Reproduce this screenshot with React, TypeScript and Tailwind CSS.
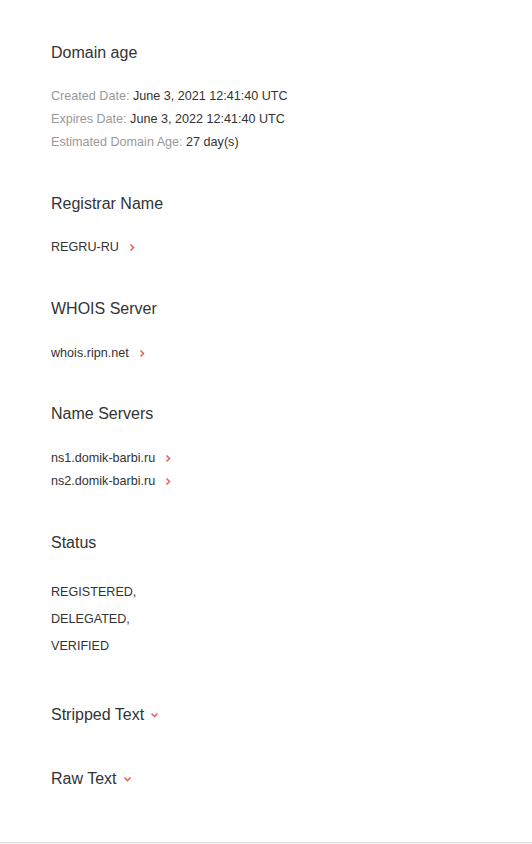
import React from "react";

function ChevronRight() {
  return (
    <svg width="8" height="9" viewBox="0 0 8 9" className="ml-[9px] inline-block" aria-hidden>
      <path d="M2.5 1.5 L5.5 4.5 L2.5 7.5" fill="none" stroke="#e8625a" strokeWidth="1.6" />
    </svg>
  );
}

function ChevronDown() {
  return (
    <svg width="9" height="8" viewBox="0 0 9 8" className="ml-[6px] inline-block" aria-hidden>
      <path d="M1.5 2.5 L4.5 5.5 L7.5 2.5" fill="none" stroke="#e8625a" strokeWidth="1.6" />
    </svg>
  );
}

function Heading({ children }: { children: React.ReactNode }) {
  return <h2 className="text-[16px] leading-[24px] text-[#333]">{children}</h2>;
}

function LinkRow({ text }: { text: string }) {
  return (
    <div className="flex items-center leading-[23px]">
      <span>{text}</span>
      <ChevronRight />
    </div>
  );
}

export default function App() {
  return (
    <div className="min-h-[844px] bg-white flex flex-col" style={{ fontFamily: '"Liberation Sans", Arial, sans-serif' }}>
      <div className="flex-1 px-[51px] pt-[41px] pb-[51px] text-[12.6px] text-[#333]">
        <section>
          <Heading>Domain age</Heading>
          <div className="mt-[19.5px] leading-[23px]">
            <div><span className="text-[#999]">Created Date:</span> June 3, 2021 12:41:40 UTC</div>
            <div><span className="text-[#999]">Expires Date:</span> June 3, 2022 12:41:40 UTC</div>
            <div><span className="text-[#999]">Estimated Domain Age:</span> 27 day(s)</div>
          </div>
        </section>

        <section className="mt-[38.5px]">
          <Heading>Registrar Name</Heading>
          <div className="mt-[19.5px]">
            <LinkRow text="REGRU-RU" />
          </div>
        </section>

        <section className="mt-[38.5px]">
          <Heading>WHOIS Server</Heading>
          <div className="mt-[20.5px]">
            <LinkRow text="whois.ripn.net" />
          </div>
        </section>

        <section className="mt-[37.5px]">
          <Heading>Name Servers</Heading>
          <div className="mt-[20.5px]">
            <LinkRow text="ns1.domik-barbi.ru" />
            <LinkRow text="ns2.domik-barbi.ru" />
          </div>
        </section>

        <section className="mt-[38.5px]">
          <Heading>Status</Heading>
          <div className="mt-[23.5px] leading-[27px]">
            <div>REGISTERED,</div>
            <div>DELEGATED,</div>
            <div>VERIFIED</div>
          </div>
        </section>

        <section className="mt-[43.5px]">
          <h2 className="flex items-center text-[16px] leading-[24px] text-[#333]">
            Stripped Text
            <ChevronDown />
          </h2>
        </section>

        <section className="mt-[40px]">
          <h2 className="flex items-center text-[16px] leading-[24px] text-[#333]">
            Raw Text
            <ChevronDown />
          </h2>
        </section>
      </div>
      <div className="h-[3px] border-t border-[#dcdcdc] bg-[#f2f2f2]" />
    </div>
  );
}
